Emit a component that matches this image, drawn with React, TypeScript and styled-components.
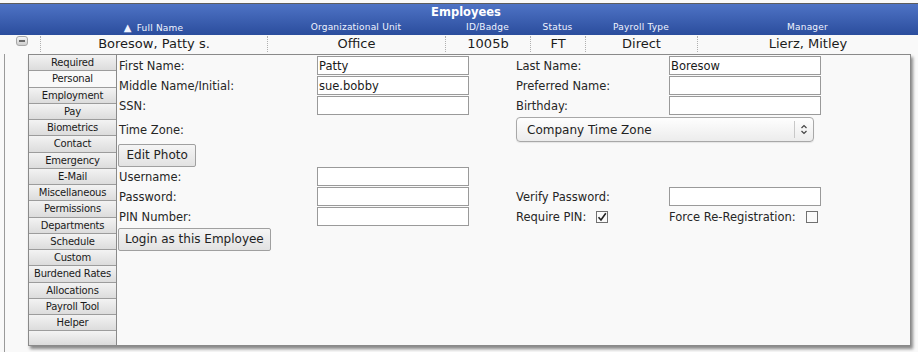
import React from 'react';
import styled, { createGlobalStyle } from 'styled-components';

const GlobalStyle = createGlobalStyle`
  html, body {
    margin: 0;
    padding: 0;
    background: #f9f9f9;
  }
  body {
    font-family: 'DejaVu Sans', Verdana, sans-serif;
    color: #222;
  }
`;

const COLUMNS = '40px 227px 178px 85px 55px 112px 1fr';

const Page = styled.div`
  width: 918px;
  height: 352px;
  padding-top: 3px;
  box-sizing: border-box;
  overflow: hidden;
  display: flex;
  flex-direction: column;
`;

const Header = styled.div`
  border-top: 1px solid #5c5c5c;
  background: linear-gradient(#4e73c5, #2b4d9d);
  height: 31px;
  color: #fff;
`;

const Title = styled.div`
  height: 16px;
  line-height: 16px;
  padding-left: 14px;
  text-align: center;
  font-weight: bold;
  font-size: 11.5px;
`;

const HeadRow = styled.div`
  display: grid;
  grid-template-columns: ${COLUMNS};
  height: 14px;
  align-items: center;
`;

const HeadCell = styled.div`
  text-align: center;
  font-size: 9px;
  letter-spacing: 0.2px;
  color: #f0f4ff;
  white-space: nowrap;
`;

const SortArrow = styled.span`
  font-size: 10px;
  margin-right: 5px;
`;

const DataRow = styled.div`
  display: grid;
  grid-template-columns: ${COLUMNS};
  height: 18px;
  align-items: center;
`;

const DataCell = styled.div<{ $first?: boolean }>`
  height: 16px;
  line-height: 16px;
  text-align: center;
  font-size: 13px;
  color: #1c1c1c;
  white-space: nowrap;
  border-left: ${(p) => (p.$first ? 'none' : '1px dotted #b0b0b0')};
`;

const Collapse = styled.span`
  display: flex;
  align-items: center;
  justify-content: center;
  width: 12px;
  height: 10px;
  margin-left: 16px;
  box-sizing: border-box;
  border: 1px solid #a8a8a8;
  border-radius: 3px;
  background: linear-gradient(#f6f6f6, #cdcdcd);

  &::after {
    content: '';
    width: 6px;
    height: 2px;
    background: #6a6a6a;
  }
`;

const Detail = styled.div`
  flex: 1;
  margin-top: 1px;
  margin-left: 4px;
  padding-left: 23px;
  border-left: 1px solid #9a9a9a;
`;

const Panel = styled.div`
  width: 883px;
  height: 292px;
  box-sizing: border-box;
  border: 1px solid #8a8a8a;
  background: #f9f9f9;
  box-shadow: 2px 3px 3px rgba(0, 0, 0, 0.45);
  display: flex;
`;

const TabList = styled.div`
  width: 88px;
  box-sizing: border-box;
  border-right: 1px solid #8a8a8a;
  display: flex;
  flex-direction: column;
`;

const Tab = styled.div<{ $active?: boolean }>`
  height: 16.25px;
  flex-shrink: 0;
  box-sizing: border-box;
  border-bottom: 1px solid #9c9c9c;
  background: ${(p) => (p.$active ? '#f9f9f9' : 'linear-gradient(#f3f3f3, #dcdcdc)')};
  font-size: 10px;
  letter-spacing: -0.2px;
  line-height: 15px;
  text-align: center;
  color: #1a1a1a;
  white-space: nowrap;
`;

const TabFill = styled.div`
  flex: 1;
  background: linear-gradient(#f3f3f3, #dcdcdc);
`;

const Form = styled.div`
  display: grid;
  grid-template-columns: 200px 152px 47px 153px 152px;
  grid-template-rows: 20px 20px 20px 27px 24px 20px 20px 20px 24px;
  align-items: center;
  padding-top: 1px;
  align-content: start;
`;

const Label = styled.div<{ $col: number; $indent?: boolean }>`
  grid-column: ${(p) => p.$col};
  padding-left: ${(p) => (p.$indent ? '2px' : '0')};
  font-size: 11.5px;
  color: #262626;
  white-space: nowrap;
`;

const TextInput = styled.input<{ $col: number }>`
  grid-column: ${(p) => p.$col};
  align-self: start;
  width: 152px;
  height: 19px;
  box-sizing: border-box;
  margin: 0;
  padding: 0 1px;
  border: 1px solid #9a9a9a;
  background: #fff;
  font-family: 'DejaVu Sans', Verdana, sans-serif;
  font-size: 11.5px;
  color: #1a1a1a;
  outline: none;
`;

const SelectBox = styled.div`
  grid-column: 4 / span 2;
  width: 298px;
  height: 25px;
  box-sizing: border-box;
  display: flex;
  align-items: stretch;
  border: 1px solid #a8a8a8;
  border-radius: 4px;
  background: linear-gradient(#fefefe, #ececec);
  box-shadow: 0 1px 1px rgba(0, 0, 0, 0.08);
`;

const SelectValue = styled.span`
  flex: 1;
  display: flex;
  align-items: center;
  padding-left: 10px;
  font-size: 12px;
  color: #222;
`;

const SelectArrow = styled.span`
  width: 18px;
  display: flex;
  align-items: center;
  justify-content: center;
  border-left: 1px solid #c8c8c8;
  margin: 3px 0;
`;

const Button = styled.button<{ $span: number; $pad: number }>`
  grid-column: 1 / span ${(p) => p.$span};
  justify-self: start;
  margin: 0 0 0 1px;
  height: 23px;
  padding: 0 ${(p) => p.$pad}px;
  border: 1px solid #a0a0a0;
  border-radius: 2px;
  background: linear-gradient(#f5f5f5, #e2e2e2);
  font-family: 'DejaVu Sans', Verdana, sans-serif;
  font-size: 12px;
  color: #222;
`;

const CheckField = styled.div<{ $col: number }>`
  grid-column: ${(p) => p.$col};
  display: flex;
  align-items: center;
  gap: 10px;
  font-size: 11.5px;
  color: #262626;
  white-space: nowrap;
`;

const Box = styled.span`
  width: 12px;
  height: 12px;
  box-sizing: border-box;
  border: 1px solid #707070;
  background: #fafafa;
  display: flex;
  align-items: center;
  justify-content: center;
`;

const Check = ({ checked }: { checked?: boolean }) => (
  <Box>
    {checked && (
      <svg width="10" height="10" viewBox="0 0 10 10">
        <path d="M1.5 5.2 L4 8 L8.8 1.2" fill="none" stroke="#222" strokeWidth="1.6" />
      </svg>
    )}
  </Box>
);

const tabs = [
  'Required',
  'Personal',
  'Employment',
  'Pay',
  'Biometrics',
  'Contact',
  'Emergency',
  'E-Mail',
  'Miscellaneous',
  'Permissions',
  'Departments',
  'Schedule',
  'Custom',
  'Burdened Rates',
  'Allocations',
  'Payroll Tool',
  'Helper',
];

const App = () => {
  return (
    <>
      <GlobalStyle />
      <Page>
        <Header>
          <Title>Employees</Title>
          <HeadRow>
            <HeadCell />
            <HeadCell>
              <SortArrow>▲</SortArrow>Full Name
            </HeadCell>
            <HeadCell>Organizational Unit</HeadCell>
            <HeadCell>ID/Badge</HeadCell>
            <HeadCell>Status</HeadCell>
            <HeadCell>Payroll Type</HeadCell>
            <HeadCell>Manager</HeadCell>
          </HeadRow>
        </Header>
        <DataRow>
          <DataCell $first>
            <Collapse />
          </DataCell>
          <DataCell>Boresow, Patty s.</DataCell>
          <DataCell>Office</DataCell>
          <DataCell>1005b</DataCell>
          <DataCell>FT</DataCell>
          <DataCell>Direct</DataCell>
          <DataCell>Lierz, Mitley</DataCell>
        </DataRow>
        <Detail>
          <Panel>
            <TabList>
              {tabs.map((t) => (
                <Tab key={t} $active={t === 'Personal'}>
                  {t}
                </Tab>
              ))}
              <TabFill />
            </TabList>
            <Form>
              <Label $col={1} $indent>First Name:</Label>
              <TextInput $col={2} defaultValue="Patty" />
              <Label $col={4}>Last Name:</Label>
              <TextInput $col={5} defaultValue="Boresow" />

              <Label $col={1} $indent>Middle Name/Initial:</Label>
              <TextInput $col={2} defaultValue="sue.bobby" />
              <Label $col={4}>Preferred Name:</Label>
              <TextInput $col={5} />

              <Label $col={1} $indent>SSN:</Label>
              <TextInput $col={2} />
              <Label $col={4}>Birthday:</Label>
              <TextInput $col={5} />

              <Label $col={1} $indent>Time Zone:</Label>
              <SelectBox>
                <SelectValue>Company Time Zone</SelectValue>
                <SelectArrow>
                  <svg width="8" height="11" viewBox="0 0 8 11">
                    <path d="M1.5 4 L4 1.5 L6.5 4 M1.5 7 L4 9.5 L6.5 7" fill="none" stroke="#444" strokeWidth="1.2" />
                  </svg>
                </SelectArrow>
              </SelectBox>

              <Button $span={1} $pad={7.5}>Edit Photo</Button>

              <Label $col={1} $indent>Username:</Label>
              <TextInput $col={2} />

              <Label $col={1} $indent>Password:</Label>
              <TextInput $col={2} type="password" />
              <Label $col={4}>Verify Password:</Label>
              <TextInput $col={5} type="password" />

              <Label $col={1} $indent>PIN Number:</Label>
              <TextInput $col={2} />
              <CheckField $col={4}>
                Require PIN:
                <Check checked />
              </CheckField>
              <CheckField $col={5}>
                Force Re-Registration:
                <Check />
              </CheckField>

              <Button $span={2} $pad={6}>Login as this Employee</Button>
            </Form>
          </Panel>
        </Detail>
      </Page>
    </>
  );
};

export default App;
